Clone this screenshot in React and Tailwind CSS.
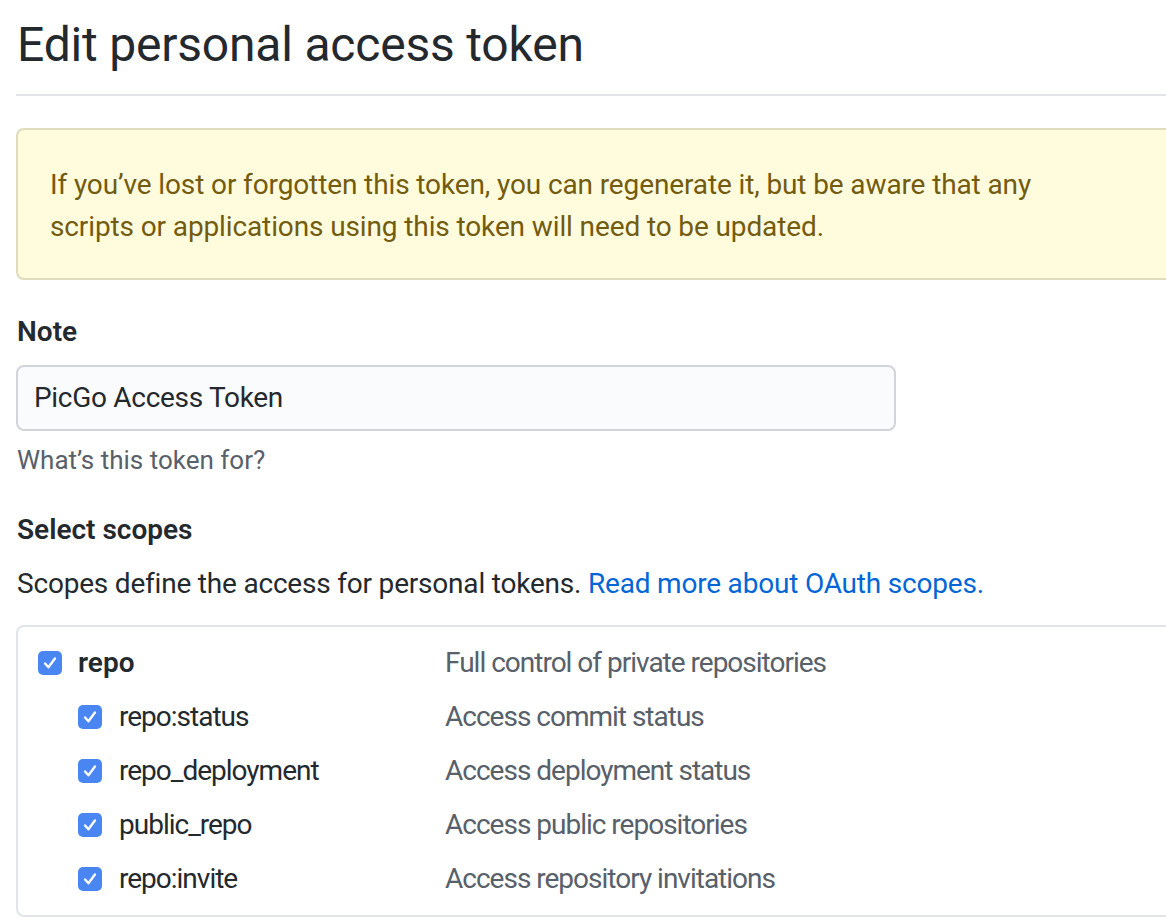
import React from 'react';

const SCOPES = [
  { name: 'repo:status', desc: 'Access commit status' },
  { name: 'repo_deployment', desc: 'Access deployment status' },
  { name: 'public_repo', desc: 'Access public repositories' },
  { name: 'repo:invite', desc: 'Access repository invitations' },
];

function Check() {
  return (
    <span className="flex h-6 w-6 shrink-0 items-center justify-center rounded-[5px] bg-[#4a86f1]">
      <svg width="18" height="18" viewBox="0 0 16 16" fill="none">
        <path d="M3.6 8.4 L6.6 11.8 L12.4 4" stroke="white" strokeWidth="2.1" strokeLinecap="round" strokeLinejoin="round" />
      </svg>
    </span>
  );
}

function ScopeRow({ name, desc, parent }) {
  return (
    <div className="flex h-[42px] items-center">
      <div className={`flex w-[407px] shrink-0 items-center ${parent ? '' : 'pl-10'}`}>
        <Check />
        <span className={parent ? 'ml-4 font-semibold text-[#24292e]' : 'ml-[17px] tracking-[-1px] text-[#24292e]'}>{name}</span>
      </div>
      <span className="tracking-[-1px] text-[#586069]">{desc}</span>
    </div>
  );
}

export default function App() {
  return (
    <div className="min-h-screen w-[1166px] overflow-hidden bg-white font-['Roboto',sans-serif] text-[28px] leading-[42px] text-[#24292e]">
      <div className="w-[1300px] pl-4">
        <div className="mt-[15px] border-b-2 border-[#e1e4e8] pb-[19px]">
          <h1 className="pl-px text-[48px] leading-[60px] font-normal tracking-[-0.2px]">Edit personal access token</h1>
        </div>

        <div className="mt-8 rounded-l-lg border-2 border-[#e0dbbc] bg-[#fffbdd] pt-[34px] pb-[30px] pl-8 tracking-[-0.12px] text-[#735c0f]">
          <p className="whitespace-nowrap">If you’ve lost or forgotten this token, you can regenerate it, but be aware that any</p>
          <p className="whitespace-nowrap">scripts or applications using this token will need to be updated.</p>
        </div>

        <div className="mt-[31px] pl-px font-semibold">Note</div>
        <div className="mt-3 flex h-[66px] w-[880px] items-center rounded-lg border-2 border-[#d1d5da] bg-[#fafbfc] pl-4 tracking-[-0.3px]">
          PicGo Access Token
        </div>
        <p className="mt-2 pl-px text-[26px] text-[#586069]">What’s this token for?</p>

        <div className="mt-7 pl-px font-semibold">Select scopes</div>
        <p className="mt-3 pl-px tracking-[-0.2px]">
          Scopes define the access for personal tokens.{' '}
          <span className="text-[#0366d6]">Read more about OAuth scopes.</span>
        </p>

        <div className="mt-5 flex flex-col gap-3 rounded-l-lg border-2 border-[#e1e4e8] pt-[15px] pb-[15px] pl-5">
          <ScopeRow name="repo" desc="Full control of private repositories" parent />
          {SCOPES.map((s) => (
            <ScopeRow key={s.name} name={s.name} desc={s.desc} />
          ))}
        </div>
      </div>
    </div>
  );
}
